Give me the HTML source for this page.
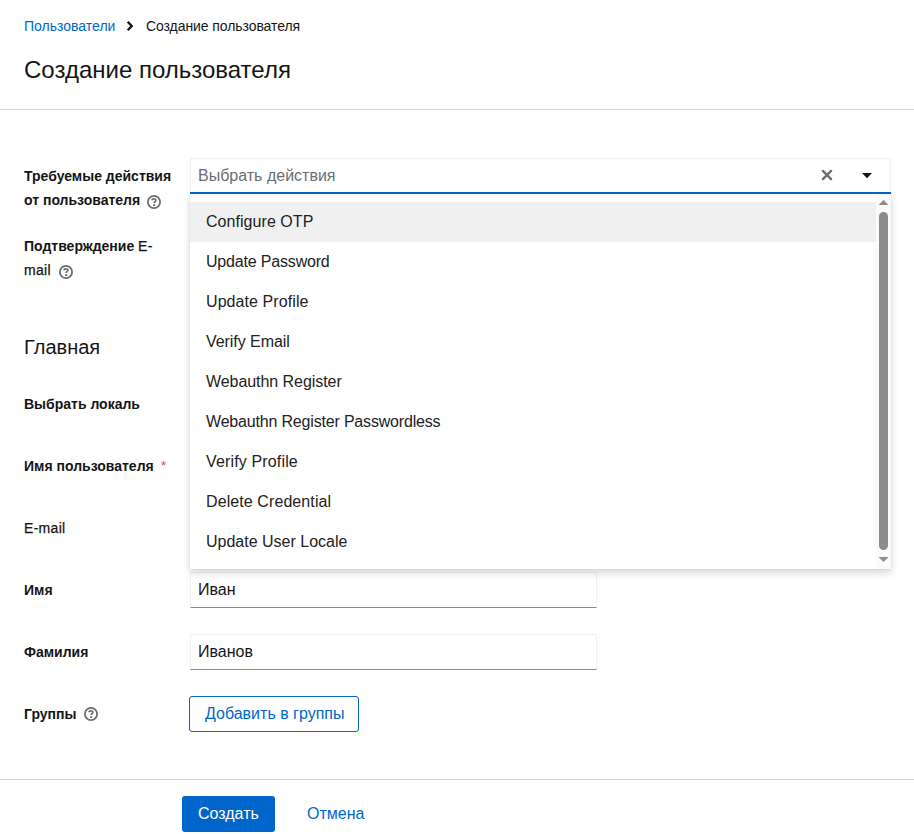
<!DOCTYPE html>
<html><head><meta charset="utf-8">
<style>
*{box-sizing:border-box;margin:0;padding:0}
html,body{width:914px;height:834px;overflow:hidden;background:#fff}
body{font-family:"Liberation Sans",sans-serif;color:#151515;position:relative}
.a{position:absolute;white-space:nowrap}
.bc{font-size:14px;line-height:21px;top:16px}
.title{font-size:24px;line-height:30px;top:55px;left:24px}
.hr{position:absolute;left:0;width:914px;height:1px;background:#d2d2d2}
.lbl{font-size:14px;font-weight:700;line-height:24px;left:24px}
.lt{font-weight:400;-webkit-text-stroke:0.25px #151515;letter-spacing:0.3px}
.help{position:absolute;width:14px;height:14px}
.inp{position:absolute;left:190px;width:407px;height:36px;border:1px solid #f0f0f0;border-bottom-color:#8a8d90;background:#fff}
.inp span{position:absolute;left:7px;top:5px;font-size:16px;line-height:24px}
.menu{position:absolute;left:190px;top:194px;width:701px;height:375px;background:#fff;box-shadow:0 4px 8px 0 rgba(3,3,3,.16),0 0 2px 0 rgba(3,3,3,.10);overflow:hidden}
.item{position:absolute;left:0;width:686px;height:40px;font-size:16px;line-height:24px;color:#222}
.item span{position:absolute;left:16px;top:8px}
</style></head><body>
<!-- breadcrumb -->
<div class="a bc" style="left:24px;color:#0066cc">Пользователи</div>
<svg class="a" style="left:124px;top:19px" width="12" height="14" viewBox="0 0 12 14"><path d="M3.7 2.7 L7.7 7 L3.7 11.3" fill="none" stroke="#151515" stroke-width="2.4" stroke-linecap="butt" stroke-linejoin="miter"/></svg>
<div class="a bc" style="left:146px;letter-spacing:-0.08px">Создание пользователя</div>
<div class="a title">Создание пользователя</div>
<div class="hr" style="top:109px"></div>

<!-- labels -->
<div class="a lbl" style="top:164px">Требуемые действия<br>от пользователя</div>
<svg class="help" style="left:147px;top:195px" viewBox="0 0 14 14"><circle cx="7" cy="7" r="6.1" fill="none" stroke="#6a6e73" stroke-width="1.8"/><path d="M5.1 5.3 C5.1 3.3 8.9 3.3 8.9 5.2 C8.9 6.5 7.1 6.6 7.1 8.1" fill="none" stroke="#6a6e73" stroke-width="1.7"/><rect x="6.1" y="9.2" width="2" height="1.8" fill="#6a6e73"/></svg>
<div class="a lbl" style="top:234px">Подтверждение <span class="lt">E-</span><br><span class="lt">mail</span></div>
<svg class="help" style="left:59px;top:265px" viewBox="0 0 14 14"><circle cx="7" cy="7" r="6.1" fill="none" stroke="#6a6e73" stroke-width="1.8"/><path d="M5.1 5.3 C5.1 3.3 8.9 3.3 8.9 5.2 C8.9 6.5 7.1 6.6 7.1 8.1" fill="none" stroke="#6a6e73" stroke-width="1.7"/><rect x="6.1" y="9.2" width="2" height="1.8" fill="#6a6e73"/></svg>

<div class="a" style="left:24px;top:334px;font-size:20px;line-height:26px">Главная</div>
<div class="a lbl" style="top:392px">Выбрать локаль</div>
<div class="a lbl" style="top:454px">Имя пользователя</div>
<div class="a" style="left:161px;top:454px;font-size:13px;line-height:24px;color:#d4483c">*</div>
<div class="a lbl" style="top:516px"><span class="lt">E-mail</span></div>
<div class="a lbl" style="top:578px">Имя</div>
<div class="a lbl" style="top:640px">Фамилия</div>
<div class="a lbl" style="top:702px">Группы</div>
<svg class="help" style="left:84px;top:707px" viewBox="0 0 14 14"><circle cx="7" cy="7" r="6.1" fill="none" stroke="#6a6e73" stroke-width="1.8"/><path d="M5.1 5.3 C5.1 3.3 8.9 3.3 8.9 5.2 C8.9 6.5 7.1 6.6 7.1 8.1" fill="none" stroke="#6a6e73" stroke-width="1.7"/><rect x="6.1" y="9.2" width="2" height="1.8" fill="#6a6e73"/></svg>

<!-- inputs -->
<div class="inp" style="top:572px"><span>Иван</span></div>
<div class="inp" style="top:634px"><span>Иванов</span></div>
<div class="a" style="left:189px;top:696px;width:170px;height:36px;border:1px solid #0066cc;border-radius:3px;color:#0066cc;font-size:16px;line-height:24px;padding:5px 0 0 15px">Добавить в группы</div>

<!-- select toggle -->
<div class="a" style="left:190px;top:158px;width:701px;height:36px;border:1px solid #f0f0f0;background:#fff">
  <span class="a" style="left:7px;top:5px;font-size:16px;line-height:24px;color:#6a6e73">Выбрать действия</span>
</div>
<div class="a" style="left:190px;top:192px;width:701px;height:2px;background:#0066cc"></div>
<svg class="a" style="left:820px;top:168px" width="14" height="14" viewBox="0 0 14 14"><path d="M2.9 2.9 L11.1 11.1 M11.1 2.9 L2.9 11.1" stroke="#6a6e73" stroke-width="2.4" stroke-linecap="round"/></svg>
<svg class="a" style="left:861px;top:172px" width="12" height="8" viewBox="0 0 12 8"><path d="M1 1 L11 1 L6 6.2 Z" fill="#151515"/></svg>

<!-- menu -->
<div class="menu">
  <div class="item" style="top:8px;background:#f0f0f0"><span style="letter-spacing:0.05px">Configure OTP</span></div>
  <div class="item" style="top:48px"><span style="letter-spacing:-0.18px">Update Password</span></div>
  <div class="item" style="top:88px"><span style="letter-spacing:0.08px">Update Profile</span></div>
  <div class="item" style="top:128px"><span style="letter-spacing:-0.05px">Verify Email</span></div>
  <div class="item" style="top:168px"><span style="letter-spacing:-0.06px">Webauthn Register</span></div>
  <div class="item" style="top:208px"><span style="letter-spacing:-0.18px">Webauthn Register Passwordless</span></div>
  <div class="item" style="top:248px"><span style="letter-spacing:0.15px">Verify Profile</span></div>
  <div class="item" style="top:288px"><span style="letter-spacing:0.09px">Delete Credential</span></div>
  <div class="item" style="top:328px"><span>Update User Locale</span></div>
  <!-- scrollbar -->
  <div style="position:absolute;left:686px;top:0;width:15px;height:375px;background:#fafafa"></div>
  <svg style="position:absolute;left:686px;top:0" width="15" height="375" viewBox="0 0 15 375">
    <path d="M2.5 11 L12.5 11 L7.5 6 Z" fill="#8c8c8c"/>
    <rect x="3" y="18" width="9" height="338" rx="4.5" fill="#8c8c8c"/>
    <path d="M2.5 363 L12.5 363 L7.5 368 Z" fill="#8c8c8c"/>
  </svg>
</div>

<!-- footer -->
<div class="hr" style="top:779px"></div>
<div class="a" style="left:182px;top:796px;width:93px;height:36px;background:#0066cc;border-radius:3px;color:#fff;font-size:16px;line-height:24px;padding:6px 0 0 16px">Создать</div>
<div class="a" style="left:307px;top:802px;color:#0066cc;font-size:16px;line-height:24px">Отмена</div>
</body></html>
